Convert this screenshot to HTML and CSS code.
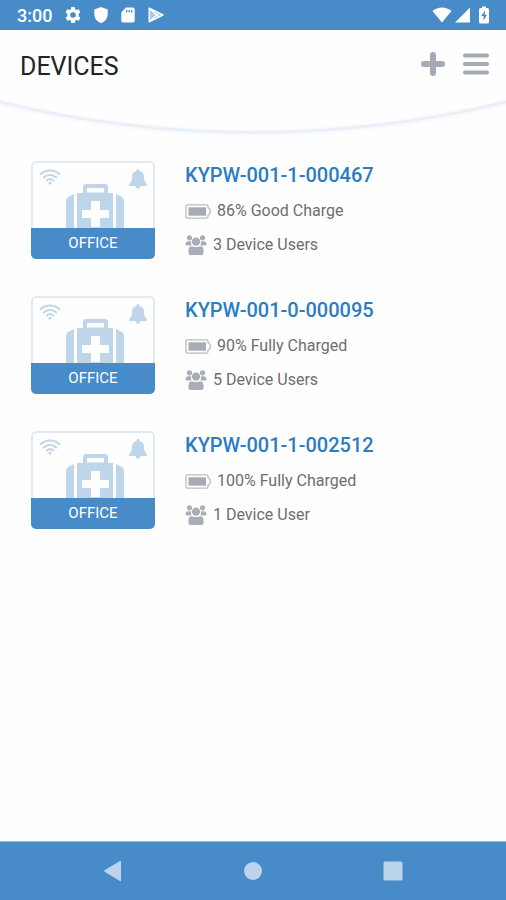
FILE: index.html
```html
<!DOCTYPE html>
<html lang="en">
<head>
<meta charset="utf-8">
<meta name="viewport" content="width=device-width, initial-scale=1">
<title>Devices</title>
<link rel="stylesheet" href="styles.css">
</head>
<body>
<svg class="defs" aria-hidden="true">
  <symbol id="wifi" viewBox="0 0 22 16">
    <g fill="none" stroke="currentColor" stroke-width="2" stroke-linecap="round">
      <path d="M1.500 5.200C7 .2 15 .2 20.500 5.200"/>
      <path d="M4.700 8.500C8.500 5 13.500 5 17.300 8.500"/>
      <path d="M7.800 11.500C9.800 9.700 12.200 9.700 14.200 11.500"/>
    </g>
    <circle cx="11" cy="14" r="1.600" fill="currentColor"/>
  </symbol>
  <symbol id="bell" viewBox="0 0 18 20">
    <path fill="currentColor" d="M9 0c.9 0 1.400.6 1.400 1.500v.6c3 .6 4.600 2.700 4.600 5.400 0 4.200.9 5.800 2.600 7.300.9.900.4 2.300-.7 2.300H1.100c-1.100 0-1.600-1.400-.7-2.300C2.100 13.300 3 11.700 3 7.500c0-2.700 1.600-4.800 4.600-5.400v-.6C7.600.6 8.100 0 9 0zM6.600 17.100h4.800c0 1.700-1 2.800-2.400 2.800s-2.400-1.100-2.400-2.800z"/>
  </symbol>
  <symbol id="kit" viewBox="0 0 58 44">
    <path fill="currentColor" fill-rule="evenodd" d="M17 9V3q0-3 3-3h19q3 0 3 3v6h5v35H11V9zM21 4.500v4h17v-4q0-.5-.5-.5h-16q-.5 0-.5.500zM25 17v9h-9v8h9v9h9v-9h9v-8h-9v-9z"/>
    <path fill="currentColor" d="M8 10v34H0V17q0-2 2-4zM50 10v34h8V17q0-2-2-4z"/>
  </symbol>
  <symbol id="battery" viewBox="0 0 26 15">
    <path d="M2.500.8h19q1.500 0 1.500 1.500v1.500l2.200 1.700v4L23 11.200v1.500q0 1.500-1.500 1.500h-19Q1 14.200 1 12.700V2.300Q1 .8 2.500.8z" fill="none" stroke="#b8bdc5" stroke-width="1.300"/>
    <path fill="#a6abb4" d="M3.500 3.300h17.500v8.400H3.500z"/>
  </symbol>
  <symbol id="users" viewBox="0 0 22 20">
    <g fill="#a8aeb7">
      <circle cx="4.500" cy="2.800" r="2.600"/><circle cx="17.500" cy="2.800" r="2.600"/>
      <path d="M.5 9.500Q.5 6.200 3.500 6.200h2.300l.6 4.300H1.500q-1 0-1-1zM21.500 9.500q0-3.300-3-3.300h-2.300l-.6 4.300h4.900q1 0 1-1z"/>
      <circle cx="11" cy="6.600" r="4.200"/>
      <path d="M3.500 18v-3q0-3.500 3.500-3.800 4 1.800 8 0Q18.500 11.500 18.500 15v3q0 2-2 2h-11q-2 0-2-2z"/>
    </g>
  </symbol>
</svg>
<div class="screen">
  <div class="status">
    <span class="clock">3:00</span>
    <svg width="16" height="16" viewBox="0 0 16 16"><path fill="currentColor" fill-rule="evenodd" d="M6.300 0h3.400l.4 2.200 1.500.9 2.100-.8 1.700 2.900-1.700 1.500v2.600l1.700 1.500-1.700 2.900-2.100-.8-1.500.9-.4 2.200H6.300l-.4-2.200-1.500-.9-2.100.8-1.700-2.900 1.700-1.500V6.700L.6 5.200l1.700-2.900 2.100.8 1.500-.9zM8 5.200a2.800 2.800 0 1 0 0 5.600 2.800 2.800 0 0 0 0-5.600z"/></svg>
    <svg width="14" height="16" viewBox="0 0 14 16"><path fill="currentColor" d="M7 0l6.700 2.600V7c0 4.300-2.700 7.800-6.700 9C3 14.800.3 11.300.3 7V2.600z"/></svg>
    <svg width="14" height="16" viewBox="0 0 14 16"><path fill="currentColor" fill-rule="evenodd" d="M5 .5h7q1.700 0 1.700 1.700v11.600q0 1.700-1.700 1.700H2q-1.700 0-1.700-1.700V5.200zM5 3v2.500h1.300V3zM7.500 3v2.500h1.300V3zM10 3v2.500h1.300V3z"/></svg>
    <svg width="16" height="16" viewBox="0 0 16 16"><path fill="currentColor" fill-opacity=".55" stroke="currentColor" stroke-width="1.400" stroke-linejoin="round" d="M1.200 1.200L15 8 1.200 14.800z"/><path fill="none" stroke="currentColor" stroke-width="1.300" d="M1.500 1.500L11 10M1.500 14.500L11 6"/></svg>
    <span class="signals">
      <svg width="20" height="16" viewBox="0 0 20 16"><path fill="currentColor" d="M.5 4C6-.7 14-.7 19.500 4L10 15.500z"/></svg>
      <svg width="16" height="16" viewBox="0 0 16 16"><path fill="currentColor" d="M15 .5v15H0z"/></svg>
      <svg width="12" height="18" viewBox="0 0 12 18"><path fill="currentColor" d="M4 .5h4v1.500h1.500Q11 2 11 3.500V16q0 1.500-1.500 1.500h-7Q1 17.500 1 16V3.500Q1 2 2.500 2H4z"/><path fill="#478bc9" d="M7 4.500L3.200 10h2.300v4.500L9 8.700H6.700z"/></svg>
    </span>
  </div>
  <header class="header">
    <h1>DEVICES</h1>
    <button type="button" aria-label="Add device"><svg width="24" height="24" viewBox="0 0 24 24"><path fill="none" stroke="currentColor" stroke-width="6" stroke-linecap="round" d="M12 3v18M3 12h18"/></svg></button>
    <button type="button" aria-label="Menu"><svg width="26" height="24" viewBox="0 0 26 24"><path fill="none" stroke="currentColor" stroke-width="4" stroke-linecap="round" d="M2 3.500h22M2 12h22M2 20.500h22"/></svg></button>
  </header>
  <svg class="curve" viewBox="0 0 506 40" preserveAspectRatio="none" aria-hidden="true">
    <path d="M-4 5Q253 67 510 5" fill="none" stroke="#f8fafd" stroke-width="7"/>
    <path d="M-4 4Q253 67 510 4" fill="none" stroke="#ebf0f7" stroke-width="3"/>
  </svg>
  <main class="devices">
    <article class="device">
      <div class="card">
        <div class="card-art">
          <svg class="card-wifi"><use href="#wifi"/></svg>
          <svg class="card-kit"><use href="#kit"/></svg>
          <svg class="card-bell"><use href="#bell"/></svg>
        </div>
        <div class="place">OFFICE</div>
      </div>
      <div class="info">
        <h2><a href="#d1">KYPW-001-1-000467</a></h2>
        <p><svg class="battery"><use href="#battery"/></svg>86% Good Charge</p>
        <p><svg class="users"><use href="#users"/></svg>3 Device Users</p>
      </div>
    </article>
    <article class="device">
      <div class="card">
        <div class="card-art">
          <svg class="card-wifi"><use href="#wifi"/></svg>
          <svg class="card-kit"><use href="#kit"/></svg>
          <svg class="card-bell"><use href="#bell"/></svg>
        </div>
        <div class="place">OFFICE</div>
      </div>
      <div class="info">
        <h2><a href="#d2">KYPW-001-0-000095</a></h2>
        <p><svg class="battery"><use href="#battery"/></svg>90% Fully Charged</p>
        <p><svg class="users"><use href="#users"/></svg>5 Device Users</p>
      </div>
    </article>
    <article class="device">
      <div class="card">
        <div class="card-art">
          <svg class="card-wifi"><use href="#wifi"/></svg>
          <svg class="card-kit"><use href="#kit"/></svg>
          <svg class="card-bell"><use href="#bell"/></svg>
        </div>
        <div class="place">OFFICE</div>
      </div>
      <div class="info">
        <h2><a href="#d3">KYPW-001-1-002512</a></h2>
        <p><svg class="battery"><use href="#battery"/></svg>100% Fully Charged</p>
        <p><svg class="users"><use href="#users"/></svg>1 Device User</p>
      </div>
    </article>
  </main>
  <nav class="nav">
    <button type="button" aria-label="Back"><svg width="20" height="22" viewBox="0 0 20 22"><path fill="currentColor" d="M18 1.500v19q0 1-1 .4L1.500 11.700q-1-.7 0-1.400L17 1.100q1-.6 1 .4z"/></svg></button>
    <button type="button" aria-label="Home"><svg width="20" height="22" viewBox="0 0 20 22"><circle cx="10" cy="11" r="9" fill="currentColor"/></svg></button>
    <button type="button" aria-label="Recent apps"><svg width="20" height="22" viewBox="0 0 20 22"><rect x=".5" y="1.500" width="19" height="19" rx="1.500" fill="currentColor"/></svg></button>
  </nav>
</div>
</body>
</html>
```

FILE: styles.css
```css
* { box-sizing: border-box; }

body {
  margin: 0;
  background: #fefefe;
  font-family: Roboto, "Liberation Sans", sans-serif;
}

h1, h2, p { margin: 0; }

svg { display: block; flex: none; }

button {
  border: 0;
  padding: 0;
  background: none;
  color: inherit;
  cursor: pointer;
}

.defs {
  position: absolute;
  width: 0;
  height: 0;
}

.screen {
  display: flex;
  flex-direction: column;
  min-height: 100vh;
}

.status {
  display: flex;
  align-items: center;
  gap: 13px;
  height: 30px;
  padding: 0 16px 0 17px;
  background: #478bc9;
  color: #fff;
}

.clock {
  padding-top: 2px;
  font-size: 18px;
  font-weight: 500;
  line-height: 28px;
}

.signals {
  display: flex;
  align-items: center;
  gap: 3px;
  margin-left: auto;
}

.signals svg:last-child { margin-left: 4px; }

.header {
  display: flex;
  align-items: center;
  gap: 18px;
  height: 67px;
  padding: 0 17px 0 20px;
  color: #a5abb4;
}

.header h1 {
  flex: 1;
  padding-top: 6px;
  color: #222429;
  font-size: 25px;
  font-weight: 400;
  line-height: 30px;
}

.curve {
  width: 100%;
  height: 40px;
}

.devices {
  display: flex;
  flex: 1;
  flex-direction: column;
  gap: 34px;
  padding: 24px 31px;
}

.device {
  display: flex;
  align-items: flex-start;
  gap: 30px;
}

.card {
  flex: none;
  width: 124px;
  overflow: hidden;
  border-radius: 5px;
  color: #bfd5ea;
}

.card-art {
  display: flex;
  justify-content: space-between;
  height: 67px;
  padding: 6px 6px 0;
  border: 2px solid #e1e9f4;
  border-bottom: 0;
  border-radius: 5px 5px 0 0;
}

.card-wifi { width: 22px; height: 16px; }
.card-bell { width: 18px; height: 20px; }

.card-kit {
  align-self: flex-end;
  width: 58px;
  height: 44px;
}

.place {
  background: #478bc9;
  color: #fff;
  font-size: 15px;
  line-height: 31px;
  text-align: center;
}

.info h2 {
  margin-bottom: 5px;
  font-size: 20px;
  font-weight: 500;
  line-height: 28px;
}

.info a {
  color: #2b7dc3;
  text-decoration: none;
}

.info p {
  display: flex;
  align-items: center;
  gap: 6px;
  color: #6c6e72;
  font-size: 16px;
  line-height: 34px;
}

.battery { width: 26px; height: 15px; }
.users { width: 22px; height: 20px; }

.nav {
  display: flex;
  align-items: center;
  justify-content: center;
  gap: 120px;
  height: 59px;
  border-top: 1px solid #8fb9df;
  background: #478bc9;
  color: #bbd4ec;
}
```
